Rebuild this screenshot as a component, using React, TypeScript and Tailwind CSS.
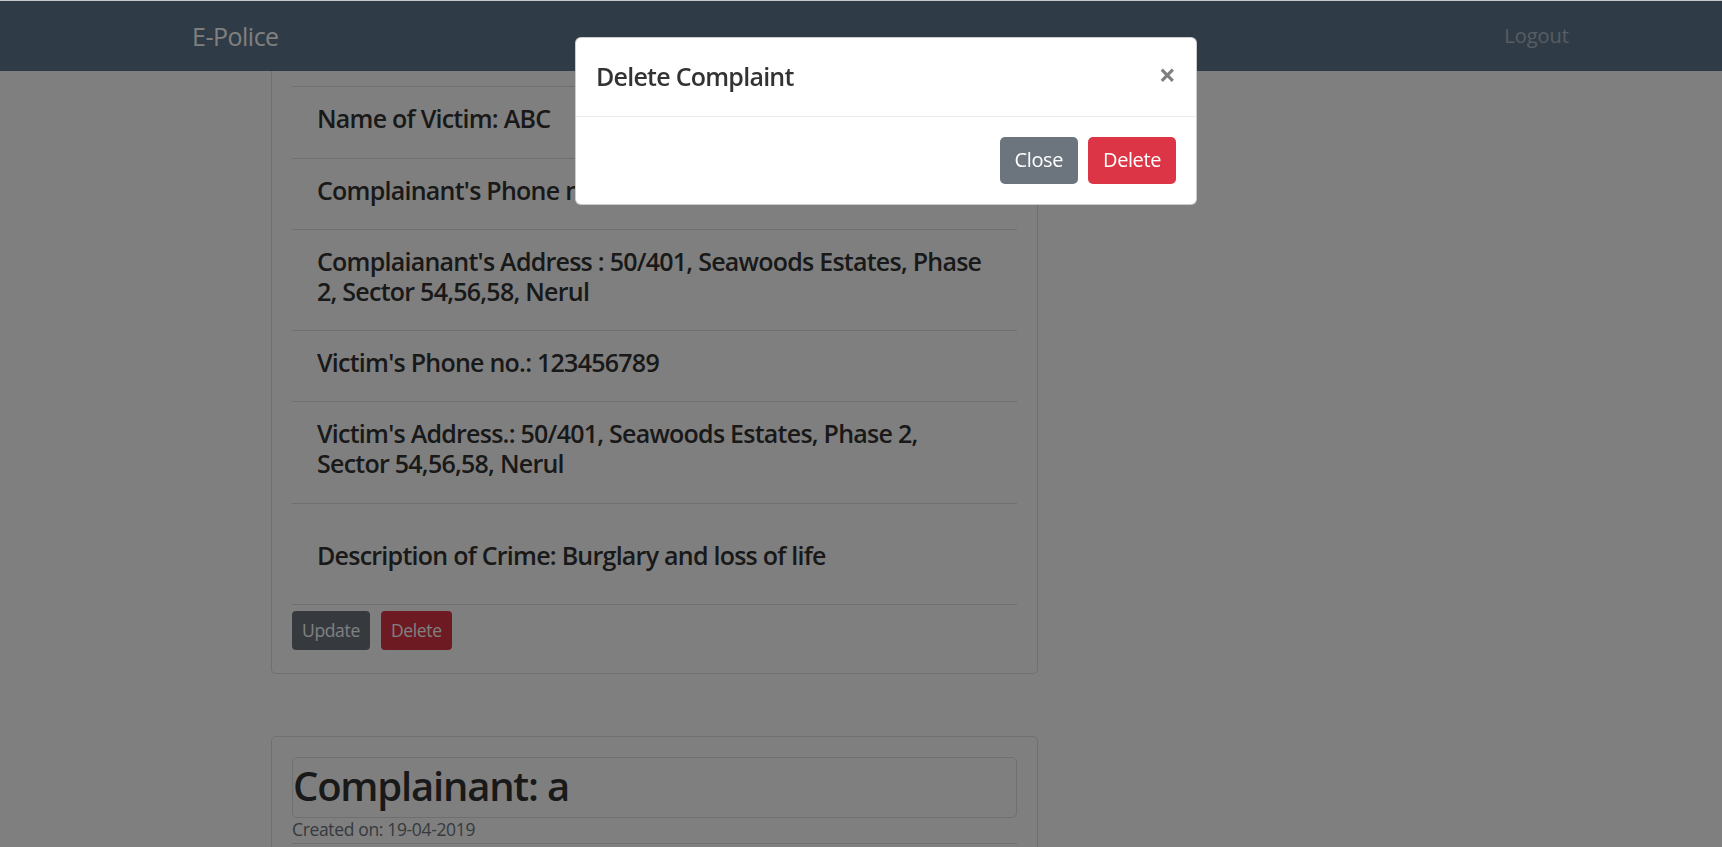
const rows = [
  { text: "Name of Victim: ABC", pad: 'pt-[16px] pb-[15px]' },
  { text: "Complainant's Phone no.: 123456789", pad: 'pt-[16px] pb-[14px]' },
  { text: "Complaianant's Address : 50/401, Seawoods Estates, Phase 2, Sector 54,56,58, Nerul", pad: 'pt-[16px] pb-[14px]' },
  { text: "Victim's Phone no.: 123456789", pad: 'pt-[16px] pb-[14px]' },
  { text: "Victim's Address.: 50/401, Seawoods Estates, Phase 2, Sector 54,56,58, Nerul", pad: 'pt-[16px] pb-[15px]' },
  { text: 'Description of Crime: Burglary and loss of life', pad: 'pt-[36px] pb-[24px]' },
];

export default function App() {
  return (
    <div className="relative min-h-screen overflow-hidden bg-white font-['Open_Sans',sans-serif] text-[#333333]">
      <div className="h-px bg-[#c6c6c6]" />
      {/* Navbar */}
      <nav className="flex h-[70px] items-center justify-between bg-[#5e768c] pl-[192px] pr-[153px]">
        <span className="text-[25px] leading-none tracking-[-0.02em] text-white">E-Police</span>
        <span className="text-[20px] leading-none text-white/50">Logout</span>
      </nav>

      <main className="pl-[271px] pb-10">
        {/* Complaint card (scrolled) */}
        <div className="w-[767px] rounded-b-[5px] border border-t-0 border-[#dfdfdf] px-5 pb-[23px]">
          <div className="h-[16px] border-b border-[#dfdfdf]" />
          {rows.map((row) => (
            <div key={row.text} className={`border-b border-[#dfdfdf] px-[25px] ${row.pad}`}>
              <h5 className="mb-[10px] text-[25px] leading-[30px] font-semibold tracking-[-0.03em]">{row.text}</h5>
            </div>
          ))}
          <div className="flex gap-[11px] pt-[6px]">
            <button className="h-[39px] rounded-[4px] bg-[#6c757d] px-[10px] text-[17.5px] tracking-[-0.02em] text-white">Update</button>
            <button className="h-[39px] rounded-[4px] bg-[#dc3545] px-[10px] text-[17.5px] tracking-[-0.02em] text-white">Delete</button>
          </div>
        </div>

        {/* Next complaint card */}
        <div className="mt-[62px] w-[767px] rounded-[5px] border border-[#dfdfdf] p-5">
          <div className="h-[61px] rounded-[5px] border border-[#dfdfdf] pt-[4px]">
            <h2 className="text-[40px] leading-[48px] font-semibold tracking-[-0.03em]">Complainant: a</h2>
          </div>
          <div className="border-b border-[#dfdfdf] pb-[2px] text-[17.5px] leading-[23px] tracking-[-0.02em] text-[#6c757d]">
            Created on: 19-04-2019
          </div>
          <div className="border-b border-[#dfdfdf] px-[25px] pt-[16px] pb-[14px]">
            <h5 className="mb-[10px] text-[25px] leading-[30px] font-semibold tracking-[-0.03em]">Name of Complainant: a</h5>
          </div>
        </div>
      </main>

      {/* Backdrop + modal */}
      <div className="fixed inset-x-0 bottom-0 top-px bg-black/50">
        <div className="flex justify-center pl-[50px] pt-[36px]">
          <div className="w-[622px] rounded-[6px] border border-black/20 bg-white">
            <div className="flex items-start justify-between border-b border-[#e9ecef] p-5">
              <h5 className="text-[25px] leading-[37.5px] font-semibold tracking-[-0.03em]">Delete Complaint</h5>
              <button className="mt-[-2px] text-[30px] leading-[37.5px] font-bold text-black/50">×</button>
            </div>
            <div className="flex justify-end gap-[10px] p-5">
              <button className="h-[47px] rounded-[5px] bg-[#6c757d] px-[15px] text-[20px] tracking-[-0.02em] text-white">Close</button>
              <button className="h-[47px] rounded-[5px] bg-[#dc3545] px-[15px] text-[20px] tracking-[-0.02em] text-white">Delete</button>
            </div>
          </div>
        </div>
      </div>
    </div>
  );
}
